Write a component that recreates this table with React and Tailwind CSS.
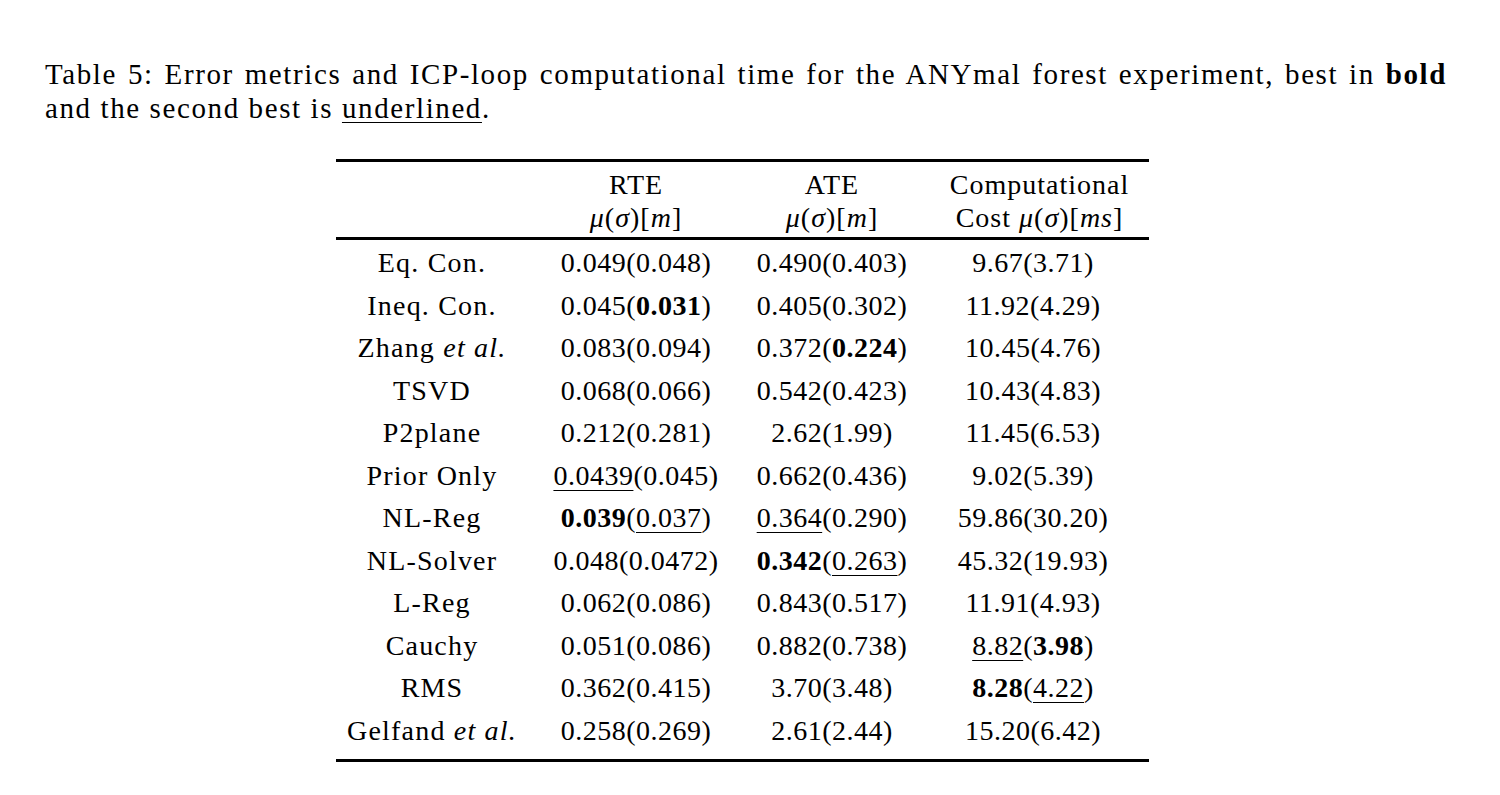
const rows = [
  { label: 'Eq. Con.', rte: ['0.049', '0.048'], ate: ['0.490', '0.403'], cost: ['9.67', '3.71'] },
  { label: 'Ineq. Con.', rte: ['0.045', { b: '0.031' }], ate: ['0.405', '0.302'], cost: ['11.92', '4.29'] },
  { label: ['Zhang ', 'et al.'], rte: ['0.083', '0.094'], ate: ['0.372', { b: '0.224' }], cost: ['10.45', '4.76'] },
  { label: 'TSVD', rte: ['0.068', '0.066'], ate: ['0.542', '0.423'], cost: ['10.43', '4.83'] },
  { label: 'P2plane', rte: ['0.212', '0.281'], ate: ['2.62', '1.99'], cost: ['11.45', '6.53'] },
  { label: 'Prior Only', rte: [{ u: '0.0439' }, '0.045'], ate: ['0.662', '0.436'], cost: ['9.02', '5.39'] },
  { label: 'NL-Reg', rte: [{ b: '0.039' }, { u: '0.037' }], ate: [{ u: '0.364' }, '0.290'], cost: ['59.86', '30.20'] },
  { label: 'NL-Solver', rte: ['0.048', '0.0472'], ate: [{ b: '0.342' }, { u: '0.263' }], cost: ['45.32', '19.93'] },
  { label: 'L-Reg', rte: ['0.062', '0.086'], ate: ['0.843', '0.517'], cost: ['11.91', '4.93'] },
  { label: 'Cauchy', rte: ['0.051', '0.086'], ate: ['0.882', '0.738'], cost: [{ u: '8.82' }, { b: '3.98' }] },
  { label: 'RMS', rte: ['0.362', '0.415'], ate: ['3.70', '3.48'], cost: [{ b: '8.28' }, { u: '4.22' }] },
  { label: ['Gelfand ', 'et al.'], rte: ['0.258', '0.269'], ate: ['2.61', '2.44'], cost: ['15.20', '6.42'] },
];

function Num({ v }) {
  if (typeof v === 'string') return <span>{v}</span>;
  if (v.b) return <span className="font-bold">{v.b}</span>;
  return <span className="underline decoration-1 underline-offset-[5px]">{v.u}</span>;
}

function Pair({ val }) {
  return (
    <span>
      <Num v={val[0]} />(<Num v={val[1]} />)
    </span>
  );
}

function Label({ label }) {
  if (typeof label === 'string') return <span>{label}</span>;
  return (
    <span>
      {label[0]}
      <i>{label[1]}</i>
    </span>
  );
}

function Mu({ unit }) {
  return (
    <span>
      <i>μ</i>(<i>σ</i>)[<i>{unit}</i>]
    </span>
  );
}

export default function App() {
  return (
    <div
      className="min-h-[795px] bg-white pl-[45px] pr-[53px] pt-[57px] text-black"
      style={{ fontFamily: '"Liberation Serif", "Times New Roman", serif' }}
    >
      <div className="text-[29px] leading-[34px] tracking-[1.6px]">
        <div className="text-justify [text-align-last:justify]">
          Table 5: Error metrics and ICP-loop computational time for the ANYmal forest experiment, best in{' '}
          <span className="font-bold">bold</span>
        </div>
        <div>
          and the second best is{' '}
          <span className="underline decoration-1 underline-offset-[4px]">underlined</span>.
        </div>
      </div>

      <div className="ml-[291px] mt-[34px] w-[813px] text-[28px]">
        <div className="h-[3px] bg-black" />
        <div className="grid grid-cols-[186px_228px_164px_235px] pb-[3px] pt-[6px] leading-[33px] tracking-[1px]">
          <div />
          <div className="text-center">
            <div>RTE</div>
            <Mu unit="m" />
          </div>
          <div className="text-center">
            <div>ATE</div>
            <Mu unit="m" />
          </div>
          <div className="pl-[16px] text-center">
            <div>Computational</div>
            <span>
              Cost <Mu unit="ms" />
            </span>
          </div>
        </div>
        <div className="h-[3px] bg-black" />
        <div className="pb-[7px] pt-[2px]">
          {rows.map((r, i) => (
            <div key={i} className="grid h-[42.5px] grid-cols-[186px_228px_164px_235px] leading-[42.5px]">
              <div className="whitespace-nowrap pl-[6px] text-center tracking-[1.2px]">
                <Label label={r.label} />
              </div>
              <div className="whitespace-nowrap text-center tracking-[0.5px]">
                <Pair val={r.rte} />
              </div>
              <div className="whitespace-nowrap text-center tracking-[0.5px]">
                <Pair val={r.ate} />
              </div>
              <div className="whitespace-nowrap pl-[3px] text-center tracking-[0.5px]">
                <Pair val={r.cost} />
              </div>
            </div>
          ))}
        </div>
        <div className="h-[3px] bg-black" />
      </div>
    </div>
  );
}
